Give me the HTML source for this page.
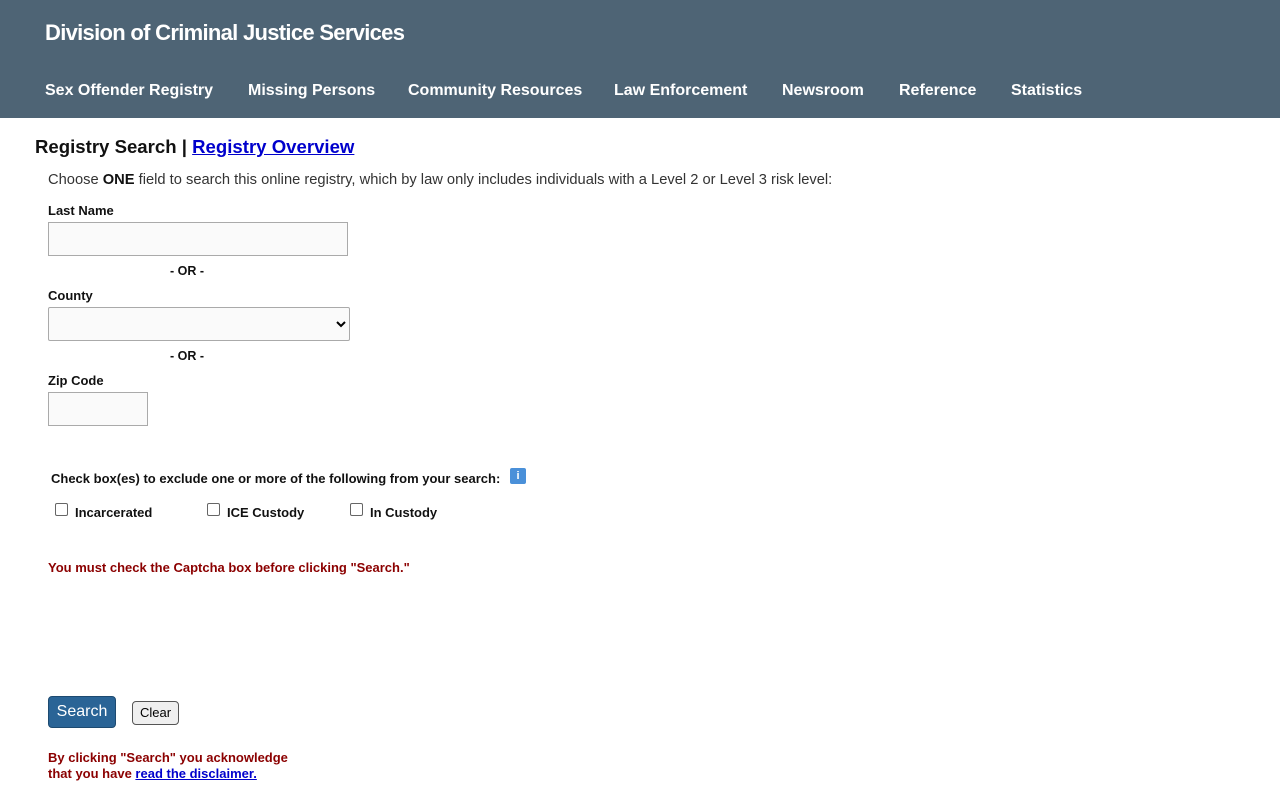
<!DOCTYPE html>
<html><head><meta charset="utf-8"><style>
body{margin:0;font-family:"Liberation Sans",sans-serif;background:#fff;color:#222;width:1280px;height:800px;overflow:hidden;position:relative}
.hdr{position:absolute;left:0;top:0;width:1280px;height:118px;background:#4e6475}
.title{position:absolute;left:45px;top:20px;color:#fff;font-size:22px;font-weight:bold;letter-spacing:-0.7px}
.nav{position:absolute;top:82px;color:#fff;font-size:16px;font-weight:bold;white-space:nowrap}
.a{position:absolute;white-space:nowrap}
.b{font-weight:bold}
input.t,select{position:absolute;border:1px solid #aaa;background:#fafafa;box-sizing:border-box;margin:0}
.red{color:#8b0000;font-weight:bold;font-size:13px}
.cb{position:absolute;width:11px;height:11px;border:1px solid #666;border-radius:2px;background:#fff}
</style></head><body>
<div class="hdr">
<div class="title">Division of Criminal Justice Services</div>
<div class="nav" style="left:45px">Sex Offender Registry</div>
<div class="nav" style="left:248px">Missing Persons</div>
<div class="nav" style="left:408px">Community Resources</div>
<div class="nav" style="left:614px">Law Enforcement</div>
<div class="nav" style="left:782px">Newsroom</div>
<div class="nav" style="left:899px">Reference</div>
<div class="nav" style="left:1011px">Statistics</div>
</div>
<div class="a" style="left:35px;top:136px;font-size:18.6px;font-weight:bold;color:#111">Registry Search | <a href="#" style="color:#0000cc">Registry Overview</a></div>
<div class="a" style="left:48px;top:172px;font-size:14.7px;color:#333">Choose <b style="color:#111">ONE</b> field to search this online registry, which by law only includes individuals with a Level 2 or Level 3 risk level:</div>
<div class="a b" style="left:48px;top:203px;font-size:13px;color:#111">Last Name</div>
<input class="t" style="left:48px;top:222px;width:300px;height:34px">
<div class="a b" style="left:170px;top:264px;font-size:12.5px;color:#111">- OR -</div>
<div class="a b" style="left:48px;top:288px;font-size:13px;color:#111">County</div>
<select style="left:48px;top:307px;width:302px;height:34px;border-radius:2px"></select>
<div class="a b" style="left:170px;top:349px;font-size:12.5px;color:#111">- OR -</div>
<div class="a b" style="left:48px;top:373px;font-size:13px;color:#111">Zip Code</div>
<input class="t" style="left:48px;top:392px;width:100px;height:34px">
<div class="a b" style="left:51px;top:471px;font-size:13px;color:#111">Check box(es) to exclude one or more of the following from your search:</div>
<div class="a" style="left:510px;top:468px;width:16px;height:16px;background:#4a90d9;color:#fff;font-size:11px;font-weight:bold;text-align:center;line-height:16px;border-radius:2px">i</div>
<div class="cb" style="left:55px;top:503px"></div><div class="a b" style="left:75px;top:505px;font-size:13px;color:#111">Incarcerated</div>
<div class="cb" style="left:207px;top:503px"></div><div class="a b" style="left:227px;top:505px;font-size:13px;color:#111">ICE Custody</div>
<div class="cb" style="left:350px;top:503px"></div><div class="a b" style="left:370px;top:505px;font-size:13px;color:#111">In Custody</div>
<div class="a red" style="left:48px;top:560px">You must check the Captcha box before clicking "Search."</div>
<div class="a" style="left:48px;top:696px;width:68px;height:32px;background:#2a6496;border:1px solid #1d4a70;border-radius:4px;box-sizing:border-box;color:#fff;font-size:16px;text-align:center;line-height:30px">Search</div>
<div class="a" style="left:132px;top:701px;width:47px;height:24px;background:#efefef;border:1px solid #555;border-radius:4px;box-sizing:border-box;font-size:13px;text-align:center;line-height:22px;color:#000">Clear</div>
<div class="a red" style="left:48px;top:750px;line-height:16px">By clicking "Search" you acknowledge<br>that you have <a href="#" style="color:#0000cc">read the disclaimer.</a></div>
</body></html>
